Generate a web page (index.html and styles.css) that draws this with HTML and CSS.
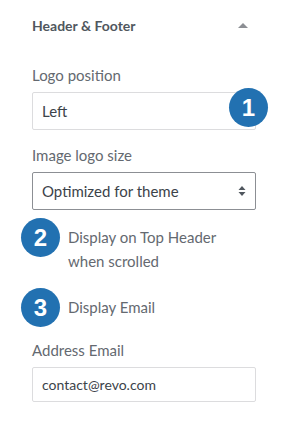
FILE: index.html
```html
<!DOCTYPE html>
<html lang="en">
<head>
    <meta charset="UTF-8">
    <meta name="viewport" content="width=device-width, initial-scale=1.0">
    <title>Header &amp; Footer</title>
    <link rel="stylesheet" href="styles.css">
</head>
<body>
    <div class="panel">
        <div class="panel-head">
            <span class="panel-title">Header &amp; Footer</span>
            <span class="caret"></span>
        </div>

        <div class="field">
            <label class="field-label">Logo position</label>
            <div class="input-wrap">
                <div class="input">Left</div>
                <span class="badge badge-over">1</span>
            </div>
        </div>

        <div class="field">
            <label class="field-label">Image logo size</label>
            <div class="select">
                Optimized for theme
                <svg class="spinner" width="8" height="12" viewBox="0 0 8 12">
                    <path d="M4 1 L7.5 5 L0.5 5 Z" fill="#50575e"/>
                    <path d="M4 11 L7.5 7 L0.5 7 Z" fill="#50575e"/>
                </svg>
            </div>
        </div>

        <div class="check-row">
            <span class="badge">2</span>
            <span class="check-text">Display on Top Header<br>when scrolled</span>
        </div>

        <div class="check-row check-row-last">
            <span class="badge">3</span>
            <span class="check-text">Display Email</span>
        </div>

        <div class="field field-email">
            <label class="field-label">Address Email</label>
            <div class="input input-small">contact@revo.com</div>
        </div>
    </div>
</body>
</html>
```

FILE: styles.css
```css
body {
    margin: 0;
    background: #fff;
    font-family: "Lato", "Noto Sans", sans-serif;
    color: #646970;
}
.panel {
    width: 224px;
    padding: 0 44px 0 32px;
}
.panel-head {
    height: 50px;
    display: flex;
    align-items: center;
    justify-content: space-between;
    padding-right: 8px;
}
.panel-title {
    font-size: 14px;
    font-weight: bold;
    color: #50575e;
}
.caret {
    width: 0;
    height: 0;
    border-left: 5px solid transparent;
    border-right: 5px solid transparent;
    border-bottom: 5px solid #8c8f94;
}
.field {
    margin-top: 14px;
}
.field-email {
    margin-top: 12px;
}
.field-label {
    display: block;
    font-size: 15px;
    line-height: 22px;
    margin-bottom: 6px;
}
.input-wrap {
    position: relative;
}
.input, .select {
    box-sizing: border-box;
    height: 38px;
    border: 1px solid #dcdcde;
    border-radius: 2px;
    padding: 0 9px;
    display: flex;
    align-items: center;
    font-size: 15px;
    color: #3c434a;
}
.select {
    border-color: #8c8f94;
    justify-content: space-between;
    padding-right: 9px;
}
.input-small {
    height: 35px;
    font-size: 14px;
}
.badge {
    flex: none;
    width: 39px;
    height: 39px;
    border-radius: 50%;
    background: #2271b1;
    color: #fff;
    font-family: "Liberation Sans", Arial, sans-serif;
    font-size: 24px;
    font-weight: bold;
    display: flex;
    align-items: center;
    justify-content: center;
}
.badge-over {
    position: absolute;
    right: -12px;
    top: -4px;
}
.check-row {
    display: flex;
    align-items: flex-start;
    gap: 8px;
    margin-left: -11px;
    margin-top: 8px;
}
.check-row-last {
    margin-top: 15px;
}
.check-text {
    font-size: 15px;
    line-height: 24px;
    padding-top: 7px;
}
```
